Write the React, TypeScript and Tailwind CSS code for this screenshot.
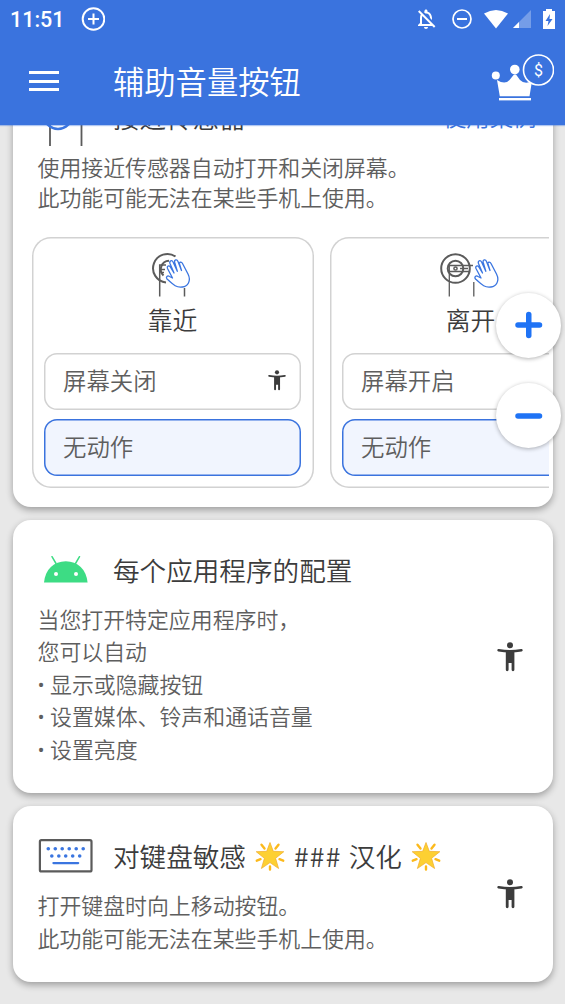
import type { ReactNode } from "react";
import { MdOutlineNotificationsOff } from "react-icons/md";

const PersonIcon = ({ className }: { className?: string }) => (
  <svg viewBox="0 0 26 30" className={className} fill="#3c3c3c">
    <circle cx="13" cy="3.2" r="3" />
    <path
      d="M1.6 8.2Q13 10.4 24.4 8.2"
      fill="none"
      stroke="#3c3c3c"
      strokeWidth="2.6"
      strokeLinecap="round"
    />
    <path d="M8.8 8.8h8.6v19a1.4 1.4 0 0 1-2.8 0V21h-3v6.8a1.4 1.4 0 0 1-2.8 0z" />
  </svg>
);

const Hand = () => (
  <path
    d="M2.5 20.5C1 18.5 3 16.5 5 18L8 19.5 3 10C2 7.5 4.5 6.5 5.8 8.5L9.5 14.5 5.5 5C4.5 2 7.5 1.2 8.7 3.7L12.8 12.8 10.2 4C9.5 1 12.5 .5 13.5 3L17 12 15 5.5C14.5 3.500 17 3 18 5L23.500 15.500C27 22.500 23 28 18 28.500 12 29.500 9 26.500 2.500 20.500z"
    fill="#fff"
    stroke="#3a75e0"
    strokeWidth="1.3"
    strokeLinejoin="round"
  />
);

const SensorNear = () => (
  <svg width="60" height="46" viewBox="0 0 60 46" fill="none" stroke="#5b5b5b" className="block">
    <path d="M24.500 4.500A14.300 14.300 0 1 0 15 30.500" strokeWidth="2" />
    <path d="M18 8.800A8.500 8.500 0 0 0 12.500 23.500" strokeWidth="2" />
    <path d="M8.700 44.500V13H15M10 17.500h4M10 20.500h3M33.500 36v8.500" strokeWidth="1.5" />
    <g transform="translate(13.500 6.500)">
      <Hand />
    </g>
  </svg>
);

const SensorAway = () => (
  <svg width="60" height="46" viewBox="0 0 60 46" fill="none" stroke="#5b5b5b" className="block">
    <circle cx="16.500" cy="16.500" r="14.300" strokeWidth="2" />
    <circle cx="16.500" cy="16.500" r="7.800" strokeWidth="2" />
    <circle cx="16.500" cy="16.500" r="1.600" strokeWidth="1.500" />
    <path d="M10.300 44.500V13.500H34M10.300 19.500H31M21 16.500h8M34.800 30v14.500" strokeWidth="1.3" />
    <g transform="translate(34 6.500)">
      <Hand />
    </g>
  </svg>
);

const Star = () => (
  <svg width="30" height="30" viewBox="0 0 30 30" className="shrink-0">
    <path
      d="M6.5 3.800L9.500 7.500M23.500 3.800L20.500 7.500M1.800 19.700L5.500 18.200M28.200 19.700L24.500 18.200M15 25.500V28.500"
      stroke="#fcb91b"
      strokeWidth="2.4"
      strokeLinecap="round"
    />
    <path
      d="M15 1.5l3.300 8.800 10.500.4-8.200 6.600 3 10.200L15 21.600l-8.600 5.900 3-10.200L1.200 10.700l10.500-.4z"
      fill="#fdd032"
      stroke="#f0ac28"
      strokeWidth=".7"
      strokeLinejoin="round"
    />
  </svg>
);

const Keyboard = () => (
  <svg width="55" height="34" viewBox="0 0 55 34">
    <rect x="1.900" y="1.200" width="51.600" height="31.200" rx="1.500" fill="none" stroke="#5b5b5b" strokeWidth="2.200" />
    <g fill="#3a75e0">
      {[10.3, 17.3, 24.2, 31.2, 38.2, 45.2].map((x) => (
        <circle key={x} cx={x} cy="9.7" r="1.8" />
      ))}
      {[13.8, 20.8, 27.7, 34.7, 41.7].map((x) => (
        <circle key={x} cx={x} cy="17" r="1.8" />
      ))}
      <rect x="14.300" y="23" width="27" height="2.200" rx="1.100" />
    </g>
  </svg>
);

const Android = () => (
  <svg width="44" height="28" viewBox="0 0 44 28">
    <path d="M0 26.5C1 13.5 10 5.200 21.800 5.200S42.500 13.500 43.600 26.500z" fill="#3ddc84" />
    <path d="M12 7.500L8 .7M31.500 7.500l4-6.800" stroke="#3ddc84" strokeWidth="1.5" strokeLinecap="round" />
    <circle cx="12" cy="18" r="2" fill="#fff" />
    <circle cx="32" cy="18" r="2" fill="#fff" />
  </svg>
);

const StatusBar = () => (
  <div className="flex h-[38px] items-center pl-[10px] pr-[10px]">
    <span className="w-[71px] pt-[2px] font-[Roboto] text-[21.5px] font-medium leading-none">11:51</span>
    <svg width="24" height="24" viewBox="0 0 24 24" fill="none" stroke="#fff" strokeWidth="2">
      <circle cx="12.500" cy="12" r="10.800" />
      <path d="M12.500 6.500v11M7 12h11" />
    </svg>
    <div className="ml-auto flex items-center">
      <MdOutlineNotificationsOff className="size-[24px]" />
      <svg width="20" height="20" viewBox="0 0 20 20" fill="none" stroke="#fff" className="ml-[14px]">
        <circle cx="10" cy="10" r="9" strokeWidth="1.7" />
        <path d="M5 10h10" strokeWidth="2" />
      </svg>
      <svg width="24" height="19" viewBox="0 0 24 19" className="ml-[12px]">
        <path d="M0 3.500Q12-3.500 24 3.500L12 18.500z" fill="#fff" />
      </svg>
      <svg width="18" height="18" viewBox="0 0 18 18" className="ml-[5px]">
        <path d="M0 18L18 0v18z" fill="#fff" opacity=".3" />
        <path d="M0 18l6-6v6z" fill="#fff" />
      </svg>
      <svg width="12" height="20" viewBox="0 0 12 20" className="-mt-px ml-[12px]">
        <path d="M3 0h6v2h3v18H0V2h3z" fill="#fff" />
        <path d="M7 5L2.500 12h3L4.500 17l5-7h-3z" fill="#3a73de" />
      </svg>
    </div>
  </div>
);

const Header = () => (
  <header className="relative z-10 h-[125px] bg-[#3a73de] text-white shadow-[0_1px_1px_rgba(58,115,222,0.4)]">
    <StatusBar />
    <div className="flex h-[86px] items-center pl-[29px] pr-[11px]">
      <div className="flex w-[30px] flex-col gap-[5.5px]">
        <div className="h-[3px] bg-white" />
        <div className="h-[3px] bg-white" />
        <div className="h-[3px] bg-white" />
      </div>
      <h1 className="ml-[54px] text-[31.3px] leading-none">辅助音量按钮</h1>
      <svg width="64" height="48" viewBox="0 0 64 48" className="-mt-[9px] ml-auto" fill="#fff">
        <circle cx="5.8" cy="22.5" r="4" />
        <circle cx="24.8" cy="16.5" r="4.8" />
        <path d="M7 27Q15 32 19.500 27L24 21.500h2l4 5.500Q35 32 42 28l-2.500 15.300H9.800z" />
        <path d="M9 45h32v2.400H9z" />
        <circle cx="48.5" cy="17" r="15" fill="#3a73de" stroke="#fff" strokeWidth="1.6" />
        <text x="48.500" y="22.500" textAnchor="middle" fontFamily="Roboto" fontSize="16" fontWeight="400">
          $
        </text>
      </svg>
    </div>
  </header>
);

const Card = ({ className = "", children }: { className?: string; children: ReactNode }) => (
  <section
    className={`ml-[12.5px] w-[540px] rounded-[18px] bg-white shadow-[0_3px_7px_rgba(0,0,0,0.32)] ${className}`}
  >
    {children}
  </section>
);

const Option = ({ label, selected, icon }: { label: string; selected?: boolean; icon?: boolean }) => (
  <div
    className={`flex h-[57px] items-center justify-between rounded-[13px] pb-px pl-[19px] pr-[15px] text-[23.4px] leading-none text-[#5e5e5e] ${
      selected
        ? "bg-[#f1f5fe] shadow-[inset_0_0_0_1.5px_#3a73de]"
        : "shadow-[inset_0_0_0_1.5px_#d2d2d2]"
    }`}
  >
    {label}
    {icon && <PersonIcon className="h-[21px] w-[18px]" />}
  </div>
);

const Panel = ({ label, away, option }: { label: string; away?: boolean; option: string }) => (
  <div className="flex h-[251px] w-[282px] shrink-0 flex-col rounded-[19px] px-[12.5px] pt-[15px] shadow-[inset_0_0_0_1.5px_#d2d2d2]">
    <div className={`h-[46px] ${away ? "ml-[97px]" : "ml-[107px]"}`}>
      {away ? <SensorAway /> : <SensorNear />}
    </div>
    <div className="mt-[7px] mb-[19.5px] text-center text-[24.8px] leading-[28px] text-[#3c3c3c]">{label}</div>
    <div className="flex flex-col gap-[9.5px]">
      <Option label={option} icon />
      <Option label="无动作" selected />
    </div>
  </div>
);

const Fab = ({ plus }: { plus?: boolean }) => (
  <button className="flex size-[65px] items-center justify-center rounded-full bg-white shadow-[0_1px_4px_rgba(0,0,0,0.3)]">
    <svg width="28" height="28" viewBox="0 0 28 28" stroke="#1f73f5" strokeWidth="5.5" strokeLinecap="round">
      <path d="M3 14h21.5" />
      {plus && <path d="M13.75 3.5v21" />}
    </svg>
  </button>
);

const Bullet = () => <span className="inline-block w-[12.5px] font-[Roboto] leading-none">•</span>;

export default function App() {
  return (
    <div className="relative h-[1004px] w-[565px] overflow-hidden bg-[#e8e8e8] font-['Noto_Sans_CJK_SC',sans-serif] font-[350] text-[#3c3c3c]">
      <Header />
      <main className="h-[879px] overflow-hidden">
        <div className="-mt-[36px] flex flex-col gap-[13px]">
          <Card className="h-[418px] pt-[13px]">
            <div className="flex h-[49px] items-start pl-[25.5px] pr-[16px]">
              <svg width="56" height="44" viewBox="0 0 56 44" fill="none">
                <path d="M12 44V20M43.500 44V20" stroke="#5b5b5b" strokeWidth="1.8" />
                <circle cx="20" cy="13" r="14" stroke="#3a75e0" strokeWidth="2.5" />
              </svg>
              <h2 className="ml-[19px] text-[26.6px] leading-[30px]">接近传感器</h2>
              <span className="ml-auto text-[23.4px] leading-[29px] text-[#3a73de]">使用案例</span>
            </div>
            <p className="pl-[25px] pt-px text-[21.9px] leading-[30px] text-[#5e5e5e]">
              使用接近传感器自动打开和关闭屏幕。
              <br />
              此功能可能无法在某些手机上使用。
            </p>
            <div className="mr-[3.5px] mt-[25px] flex gap-[16px] overflow-hidden pl-[19px]">
              <Panel label="靠近" option="屏幕关闭" />
              <Panel label="离开" option="屏幕开启" away />
            </div>
          </Card>

          <Card className="flex h-[273px] items-center justify-between pl-[25px] pr-[29.5px]">
            <div>
              <div className="flex h-[44px] items-center">
                <div className="w-[75.5px] pl-[6.5px]">
                  <Android />
                </div>
                <h2 className="text-[26.6px] leading-none">每个应用程序的配置</h2>
              </div>
              <p className="mt-[11px] text-[21.9px] leading-[32.4px] text-[#5e5e5e]">
                当您打开特定应用程序时，
                <br />
                您可以自动
                <br />
                <Bullet />
                显示或隐藏按钮
                <br />
                <Bullet />
                设置媒体、铃声和通话音量
                <br />
                <Bullet />
                设置亮度
              </p>
            </div>
            <PersonIcon className="h-[30px] w-[26px]" />
          </Card>

          <Card className="flex h-[176px] items-center justify-between pl-[25px] pr-[29.5px]">
            <div>
              <div className="flex h-[44px] items-center">
                <div className="w-[75.5px]">
                  <Keyboard />
                </div>
                <h2 className="flex items-center text-[26.6px] leading-none">
                  <span className="mr-[9px]">对键盘敏感</span>
                  <Star />
                  <span className="ml-[9px] mr-[7px] tracking-[1.3px]">###</span>
                  <span className="mr-[9px]">汉化</span>
                  <Star />
                </h2>
              </div>
              <p className="mt-[11px] text-[21.9px] leading-[32.4px] text-[#5e5e5e]">
                打开键盘时向上移动按钮。
                <br />
                此功能可能无法在某些手机上使用。
              </p>
            </div>
            <PersonIcon className="h-[30px] w-[26px]" />
          </Card>
        </div>
      </main>

      <div className="absolute left-[496px] top-[292.5px] flex flex-col gap-[25.5px]">
        <Fab plus />
        <Fab />
      </div>
    </div>
  );
}
